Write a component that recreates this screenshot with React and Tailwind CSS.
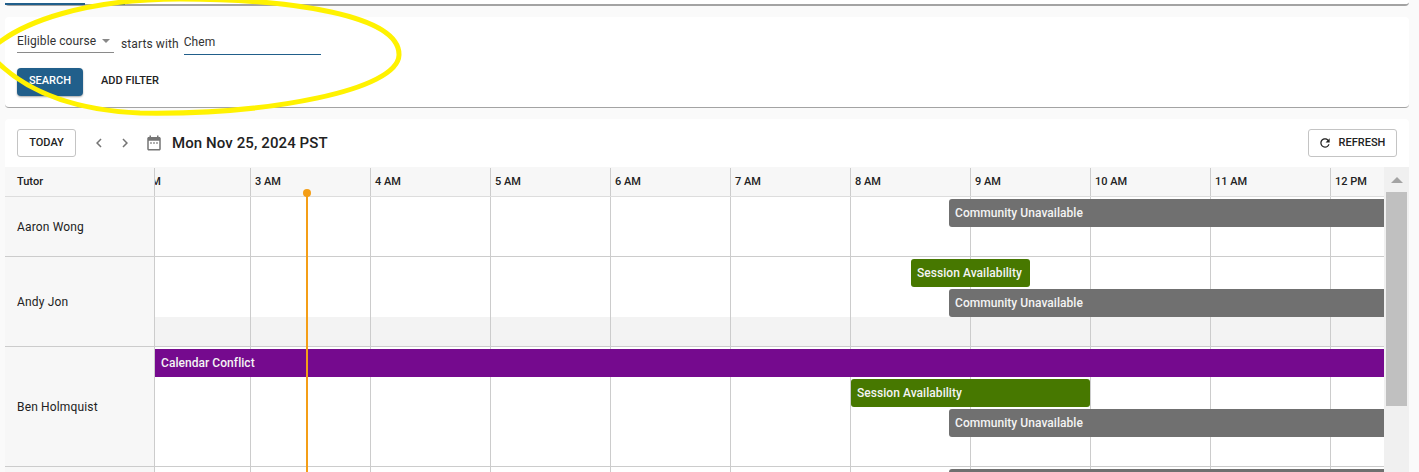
import React from 'react';

const HOURS = ['3 AM', '4 AM', '5 AM', '6 AM', '7 AM', '8 AM', '9 AM', '10 AM', '11 AM', '12 PM'];

const COLORS = {
  session: 'bg-[#477800] rounded-[3px]',
  community: 'bg-[#707070] rounded-l-[3px]',
  conflict: 'bg-[#750a8e]',
};

// left / width are relative to the timeline column, top to the row
const ROWS = [
  {
    name: 'Aaron Wong',
    height: 60,
    events: [{ label: 'Community Unavailable', type: 'community', left: 794, width: 435, top: 2 }],
  },
  {
    name: 'Andy Jon',
    height: 90,
    shaded: true,
    events: [
      { label: 'Session Availability', type: 'session', left: 756, width: 119, top: 2 },
      { label: 'Community Unavailable', type: 'community', left: 794, width: 435, top: 32 },
    ],
  },
  {
    name: 'Ben Holmquist',
    height: 120,
    events: [
      { label: 'Calendar Conflict', type: 'conflict', left: 0, width: 1229, top: 2 },
      { label: 'Session Availability', type: 'session', left: 696, width: 239, top: 32 },
      { label: 'Community Unavailable', type: 'community', left: 794, width: 435, top: 62 },
    ],
  },
  {
    name: '',
    height: 60,
    events: [{ label: '', type: 'community', left: 794, width: 435, top: 2 }],
  },
];

const HourLines = () => (
  <div className="absolute inset-0 flex">
    <div className="w-[96px] shrink-0 border-r border-[#cccccc]" />
    {HOURS.map((hour) => (
      <div key={hour} className="w-[120px] shrink-0 border-r border-[#cccccc]" />
    ))}
  </div>
);

const Row = ({ row }) => (
  <div className="flex shrink-0 border-b border-[#cccccc]" style={{ height: row.height }}>
    <div className="flex w-[150px] shrink-0 items-center border-r border-[#cccccc] bg-[#f7f7f7] pl-3 text-xs tracking-[0.15px] text-[#222222]">
      {row.name}
    </div>
    <div className="relative flex-1 overflow-hidden">
      {row.shaded && <div className="absolute inset-x-0 bottom-0 h-[29px] bg-[#f3f3f3]" />}
      <HourLines />
      {row.events.map((event) => (
        <div
          key={`${event.type}-${event.top}`}
          className={`absolute flex h-[28px] items-center pl-1.5 text-xs font-medium tracking-[0.05px] text-[#f4f4f4] ${COLORS[event.type]}`}
          style={{ left: event.left, width: event.width, top: event.top }}
        >
          {event.label}
        </div>
      ))}
    </div>
  </div>
);

const Icon = ({ d, className }) => (
  <svg viewBox="0 0 24 24" className={className} fill="currentColor">
    <path d={d} />
  </svg>
);

const App = () => {
  return (
    <div className="relative flex h-[472px] w-[1419px] flex-col gap-[11px] overflow-hidden bg-[#fafafa] pl-[5px] pr-[10px] font-['Roboto',sans-serif]">
      {/* Tab strip, mostly scrolled out of view */}
      <div className="relative h-[6px] shrink-0 rounded-b-[4px] border-b-2 border-[#a3a3a3] bg-white">
        <div className="absolute bottom-[-1px] left-0 h-[2px] w-[80px] bg-[#215f8b]" />
        <div className="absolute bottom-[-1px] left-[113px] h-[2px] w-[7px] bg-[#215f8b]" />
      </div>

      {/* Filter card */}
      <div className="flex h-[91px] shrink-0 flex-col rounded-[4px] border-b border-[#a3a3a3] bg-white pl-3 pt-[14px]">
        <div className="flex h-[24px] items-start text-xs tracking-[0.1px] text-[#333333]">
          <div className="flex h-[22px] w-[97px] items-center justify-between border-b border-[#8a8a8a] pb-px pr-[4px]">
            <span>Eligible course</span>
            <span className="h-0 w-0 border-x-[4px] border-t-[4px] border-x-transparent border-t-[#888888]" />
          </div>
          <span className="ml-[7px] mt-[5px]">starts with</span>
          <div className="ml-[5px] flex h-[24px] w-[137px] items-center border-b border-[#215f8b] pb-px">Chem</div>
        </div>
        <div className="mt-[13px] flex items-center">
          <button className="h-[28px] w-[66px] rounded-[4px] bg-[#215f8b] pb-px text-[11px] font-medium text-white shadow-[0_1px_2px_rgba(0,0,0,0.35)]">
            SEARCH
          </button>
          <button className="ml-[18px] pb-px text-[11px] font-medium text-[#222222]">ADD FILTER</button>
        </div>
      </div>

      {/* Calendar card */}
      <div className="flex min-h-0 flex-1 flex-col rounded-t-[4px] bg-white">
        <div className="flex h-[48px] shrink-0 items-center px-3">
          <button className="h-[28px] w-[59px] rounded-[3px] border border-[#c4c4c4] text-[11px] font-medium text-[#222222]">
            TODAY
          </button>
          <Icon
            d="M15.41 7.41 14 6l-6 6 6 6 1.41-1.41L10.83 12z"
            className="ml-[14px] h-[18px] w-[18px] text-[#757575]"
          />
          <Icon
            d="M10 6 8.59 7.41 13.17 12l-4.58 4.59L10 18l6-6z"
            className="ml-[8px] h-[18px] w-[18px] text-[#757575]"
          />
          <Icon
            d="M9 11H7v2h2v-2zm4 0h-2v2h2v-2zm4 0h-2v2h2v-2zm2-7h-1V2h-2v2H8V2H6v2H5c-1.11 0-1.99.9-1.99 2L3 20c0 1.1.89 2 2 2h14c1.1 0 2-.9 2-2V6c0-1.1-.9-2-2-2zm0 16H5V9h14v11z"
            className="ml-[11px] h-[18px] w-[18px] text-[#757575]"
          />
          <span className="ml-[9px] text-[15px] font-medium tracking-[0.1px] text-[#222222]">Mon Nov 25, 2024 PST</span>
          <button className="ml-auto flex h-[28px] w-[89px] items-center justify-center gap-[7px] rounded-[3px] border border-[#c4c4c4] pr-[2px] text-[11px] font-medium text-[#222222]">
            <Icon
              d="M17.65 6.35C16.2 4.9 14.21 4 12 4c-4.42 0-7.99 3.58-7.99 8s3.57 8 7.99 8c3.73 0 6.84-2.55 7.73-6h-2.08c-.82 2.33-3.04 4-5.65 4-3.31 0-6-2.69-6-6s2.69-6 6-6c1.66 0 3.14.69 4.22 1.78L13 11h7V4l-2.35 2.35z"
              className="h-[14px] w-[14px]"
            />
            REFRESH
          </button>
        </div>

        <div className="relative flex min-h-0 flex-1 overflow-hidden">
          <div className="flex w-[1379px] shrink-0 flex-col">
            {/* Hour header */}
            <div className="flex h-[30px] shrink-0 border-b border-[#dddddd] bg-[#f7f7f7] pt-px">
              <div className="flex w-[150px] shrink-0 items-center border-r border-[#cccccc] pl-3 text-[11px] font-medium text-[#222222]">
                Tutor
              </div>
              <div className="flex flex-1 overflow-hidden text-[11px] font-medium text-[#222222]">
                <div className="flex w-[96px] shrink-0 items-center justify-start overflow-hidden border-r border-[#cccccc]">
                  <span className="ml-[-20px]">2 AM</span>
                </div>
                {HOURS.map((hour) => (
                  <div key={hour} className="flex w-[120px] shrink-0 items-center border-r border-[#cccccc] pl-1">
                    {hour}
                  </div>
                ))}
              </div>
            </div>
            {ROWS.map((row) => (
              <Row key={row.name || 'next'} row={row} />
            ))}
          </div>

          {/* Scrollbar */}
          <div className="flex flex-1 flex-col items-center bg-[#f0f0f0] px-[2px]">
            <div className="flex h-[25px] w-full shrink-0 items-center justify-center">
              <span className="h-0 w-0 border-x-[6px] border-b-[6px] border-x-transparent border-b-[#a3a3a3]" />
            </div>
            <div className="h-[214px] w-full shrink-0 bg-[#c0c0c0]" />
          </div>

          {/* Current time marker */}
          <div className="absolute bottom-0 left-[301px] top-[26px] w-[2px] bg-[#f49e17]" />
          <div className="absolute left-[298px] top-[22px] h-2 w-2 rounded-full bg-[#f49e17]" />
        </div>
      </div>

      {/* Yellow hand-drawn annotation */}
      <svg className="pointer-events-none absolute left-0 top-0" width="420" height="125" fill="none">
        <path
          d="M-12 52 C 20 20, 90 -1, 180 -1 C 290 -1, 400 15, 399 55 C 398 90, 270 115, 140 113 C 70 110, 20 90, -12 52 Z"
          stroke="#fff200"
          strokeWidth="5"
        />
      </svg>
    </div>
  );
};

export default App;
